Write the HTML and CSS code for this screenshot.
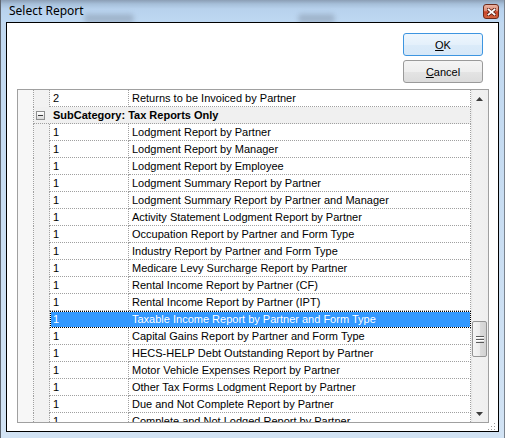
FILE: index.html
```html
<!DOCTYPE html>
<html>
<head>
<meta charset="utf-8">
<title>Select Report</title>
<link rel="stylesheet" href="styles.css">
</head>
<body>
<div class="window">
  <div class="titlebar">
    <span class="title">Select Report</span>
    <span class="ghost ghost1"></span>
    <span class="ghost ghost2"></span>
    <span class="close">
      <svg width="9" height="8" viewBox="0 0 9 8">
        <path d="M1.5 1.5 L7.5 6.5 M7.5 1.5 L1.5 6.5" stroke="#5a1c10" stroke-width="3.4" stroke-linecap="square" fill="none"/>
        <path d="M1.5 1.5 L7.5 6.5 M7.5 1.5 L1.5 6.5" stroke="#ffffff" stroke-width="1.8" stroke-linecap="square" fill="none"/>
      </svg>
    </span>
  </div>
  <div class="client">
    <div class="buttons">
      <button class="btn btn-ok"><u>O</u>K</button>
      <button class="btn"><u>C</u>ancel</button>
    </div>
    <div class="grid">
      <div class="rows">
        <div class="row"><div class="c0"></div><div class="c1"></div><div class="c2">2</div><div class="c3">Returns to be Invoiced by Partner</div></div>
        <div class="row"><div class="c0"></div><div class="group"><span class="expander"><span class="minus"></span></span>SubCategory: Tax Reports Only</div></div>
        <div class="row"><div class="c0"></div><div class="c1"></div><div class="c2">1</div><div class="c3">Lodgment Report by Partner</div></div>
        <div class="row"><div class="c0"></div><div class="c1"></div><div class="c2">1</div><div class="c3">Lodgment Report by Manager</div></div>
        <div class="row"><div class="c0"></div><div class="c1"></div><div class="c2">1</div><div class="c3">Lodgment Report by Employee</div></div>
        <div class="row"><div class="c0"></div><div class="c1"></div><div class="c2">1</div><div class="c3">Lodgment Summary Report by Partner</div></div>
        <div class="row"><div class="c0"></div><div class="c1"></div><div class="c2">1</div><div class="c3">Lodgment Summary Report by Partner and Manager</div></div>
        <div class="row"><div class="c0"></div><div class="c1"></div><div class="c2">1</div><div class="c3">Activity Statement Lodgment Report by Partner</div></div>
        <div class="row"><div class="c0"></div><div class="c1"></div><div class="c2">1</div><div class="c3">Occupation Report by Partner and Form Type</div></div>
        <div class="row"><div class="c0"></div><div class="c1"></div><div class="c2">1</div><div class="c3">Industry Report by Partner and Form Type</div></div>
        <div class="row"><div class="c0"></div><div class="c1"></div><div class="c2">1</div><div class="c3">Medicare Levy Surcharge Report by Partner</div></div>
        <div class="row"><div class="c0"></div><div class="c1"></div><div class="c2">1</div><div class="c3">Rental Income Report by Partner (CF)</div></div>
        <div class="row"><div class="c0"></div><div class="c1"></div><div class="c2">1</div><div class="c3">Rental Income Report by Partner (IPT)</div></div>
        <div class="row"><div class="c0"></div><div class="c1"></div><div class="selbox"><div class="selin"><span class="s2">1</span><span class="s3">Taxable Income Report by Partner and Form Type</span></div></div></div>
        <div class="row"><div class="c0"></div><div class="c1"></div><div class="c2">1</div><div class="c3">Capital Gains Report by Partner and Form Type</div></div>
        <div class="row"><div class="c0"></div><div class="c1"></div><div class="c2">1</div><div class="c3">HECS-HELP Debt Outstanding Report by Partner</div></div>
        <div class="row"><div class="c0"></div><div class="c1"></div><div class="c2">1</div><div class="c3">Motor Vehicle Expenses Report by Partner</div></div>
        <div class="row"><div class="c0"></div><div class="c1"></div><div class="c2">1</div><div class="c3">Other Tax Forms Lodgment Report by Partner</div></div>
        <div class="row"><div class="c0"></div><div class="c1"></div><div class="c2">1</div><div class="c3">Due and Not Complete Report by Partner</div></div>
        <div class="row"><div class="c0"></div><div class="c1"></div><div class="c2">1</div><div class="c3">Complete and Not Lodged Report by Partner</div></div>
      </div>
      <div class="vscroll">
        <div class="sbtn">
          <svg width="7" height="4" viewBox="0 0 7 4"><path d="M0 4 L3.5 0 L7 4 Z" fill="#3c3c3c"/></svg>
        </div>
        <div class="track">
          <div class="thumb">
            <svg width="8" height="7" viewBox="0 0 8 7">
              <rect x="0" y="0" width="8" height="1" fill="#5a5a5a"/>
              <rect x="0" y="1" width="8" height="1" fill="#ffffff"/>
              <rect x="0" y="3" width="8" height="1" fill="#5a5a5a"/>
              <rect x="0" y="4" width="8" height="1" fill="#ffffff"/>
              <rect x="0" y="6" width="8" height="1" fill="#5a5a5a"/>
            </svg>
          </div>
        </div>
        <div class="sbtn">
          <svg width="7" height="4" viewBox="0 0 7 4"><path d="M0 0 L7 0 L3.5 4 Z" fill="#3c3c3c"/></svg>
        </div>
      </div>
    </div>
    <div class="footer">
      <svg class="sizegrip" width="8" height="8" viewBox="0 0 8 8">
        <rect x="6" y="0" width="1" height="1" fill="#9a9a9a"/>
        <rect x="3" y="3" width="1" height="1" fill="#9a9a9a"/>
        <rect x="6" y="3" width="1" height="1" fill="#9a9a9a"/>
        <rect x="0" y="6" width="1" height="1" fill="#9a9a9a"/>
        <rect x="3" y="6" width="1" height="1" fill="#9a9a9a"/>
        <rect x="6" y="6" width="1" height="1" fill="#9a9a9a"/>
        <rect x="7" y="1" width="1" height="1" fill="#ffffff"/>
        <rect x="4" y="4" width="1" height="1" fill="#ffffff"/>
        <rect x="7" y="4" width="1" height="1" fill="#ffffff"/>
        <rect x="1" y="7" width="1" height="1" fill="#ffffff"/>
        <rect x="4" y="7" width="1" height="1" fill="#ffffff"/>
        <rect x="7" y="7" width="1" height="1" fill="#ffffff"/>
      </svg>
    </div>
  </div>
</div>
</body>
</html>
```

FILE: styles.css
```css
* { box-sizing: border-box; }
html, body { margin: 0; padding: 0; }
body {
  width: 505px;
  height: 438px;
  overflow: hidden;
  font-family: "Liberation Sans", Arial, sans-serif;
  font-size: 11px;
  background: #c7dcf1;
}
.window {
  width: 505px;
  height: 438px;
  border-left: 1px solid #5f6670;
  border-right: 1px solid #7a838e;
  background: linear-gradient(#c0d8f0, #d2e3f4);
  display: flex;
  flex-direction: column;
}
.titlebar {
  height: 22px;
  flex: none;
  display: flex;
  align-items: flex-start;
  padding-left: 8px;
  overflow: hidden;
  background: linear-gradient(#8b9eb5 0px, #a6bfd9 4px, #b8d2ed 9px, #bed8f2 22px);
}
.title {
  font-family: "Noto Sans", sans-serif;
  font-size: 12px;
  line-height: 16px;
  margin-top: 3px;
  color: #000;
  white-space: nowrap;
}
.ghost {
  height: 9px;
  margin-top: 14px;
  border-radius: 4px;
  background: #8d9fb4;
  filter: blur(2.5px);
  opacity: 0.6;
}
.ghost1 { margin-left: 0; width: 50px; }
.ghost2 { margin-left: 164px; width: 37px; }
.close {
  margin-left: auto;
  margin-right: 5px;
  margin-top: 4px;
  width: 16px;
  height: 15px;
  border: 1px solid #6e2a1a;
  border-radius: 3px;
  background: linear-gradient(#ebb4a3 0%, #dc8a74 45%, #c8452a 52%, #d1623f 100%);
  display: flex;
  align-items: center;
  justify-content: center;
}
.client {
  flex: none;
  margin: 0 5px;
  width: 493px;
  height: 410px;
  border: 1px solid #000;
  background: #fff;
  padding: 10px 9px 0 10px;
  display: flex;
  flex-direction: column;
}
.buttons {
  display: flex;
  flex-direction: column;
  align-items: flex-end;
  gap: 4px;
  margin-right: 6px;
}
.btn {
  width: 80px;
  height: 23px;
  padding: 0;
  font-family: "Liberation Sans", Arial, sans-serif;
  font-size: 11px;
  color: #000;
  border: 1px solid #9a9a9a;
  border-radius: 3px;
  background: linear-gradient(#f4f4f4 0%, #eeeeee 50%, #e4e4e4 51%, #dcdcdc 100%);
}
.btn-ok {
  border-color: #3d95e0;
  background: linear-gradient(#eef6fd 0%, #e4f0fb 50%, #dbebf9 51%, #d6e8f8 100%);
}
.grid {
  flex: none;
  margin-top: 6px;
  width: 472px;
  height: 334px;
  border: 1px solid #a0a0a0;
  display: flex;
}
.rows {
  width: 453px;
  height: 332px;
  overflow: hidden;
}
.row {
  display: flex;
  height: 17px;
}
.c0 {
  width: 16px;
  flex: none;
  background: #f7f7f7;
  border-right: 1px dotted #a0a0a0;
}
.c1 {
  width: 16px;
  flex: none;
  background: #f2f2f2;
  border-right: 1px dotted #a0a0a0;
}
.c2, .c3 {
  flex: none;
  padding-left: 3px;
  line-height: 16px;
  white-space: nowrap;
  overflow: hidden;
  color: #000;
  border-right: 1px dotted #a0a0a0;
  border-bottom: 1px dotted #a0a0a0;
}
.c2 { width: 79px; }
.c3 { width: 342px; }
.group {
  flex: none;
  width: 437px;
  display: flex;
  align-items: center;
  padding-left: 2px;
  background: #f0f0f0;
  font-weight: bold;
  white-space: nowrap;
  border-right: 1px dotted #a0a0a0;
  border-bottom: 1px dotted #a0a0a0;
}
.expander {
  width: 9px;
  height: 9px;
  margin-right: 8px;
  border: 1px solid #8e8f8f;
  background: linear-gradient(#ffffff, #d9d9d9);
  display: flex;
  align-items: center;
  justify-content: center;
}
.minus {
  width: 5px;
  height: 1px;
  background: #3a3a3a;
}
.selbox {
  flex: none;
  width: 421px;
  height: 17px;
  background: #fff;
  border: 1px dotted #000;
  display: flex;
}
.selin {
  flex: 1;
  display: flex;
  background: #3399ff;
  color: #fff;
  line-height: 15px;
  white-space: nowrap;
}
.s2 { width: 78px; padding-left: 2px; flex: none; }
.s3 { padding-left: 3px; }
.vscroll {
  width: 17px;
  flex: none;
  display: flex;
  flex-direction: column;
  background: linear-gradient(to right, #e6e6e6 0px, #f2f2f2 2px, #efefef 100%);
}
.sbtn {
  height: 17px;
  flex: none;
  display: flex;
  align-items: center;
  justify-content: center;
}
.track { flex: 1; }
.thumb {
  margin: 214px 1px 0 1px;
  height: 36px;
  border: 1px solid #959595;
  border-radius: 2px;
  background: linear-gradient(to right, #f5f5f5 0%, #ececec 50%, #dcdcdc 51%, #d2d2d2 100%);
  display: flex;
  align-items: center;
  justify-content: center;
}
.footer {
  display: flex;
  justify-content: flex-end;
  margin-right: -7px;
  height: 8px;
}
```
